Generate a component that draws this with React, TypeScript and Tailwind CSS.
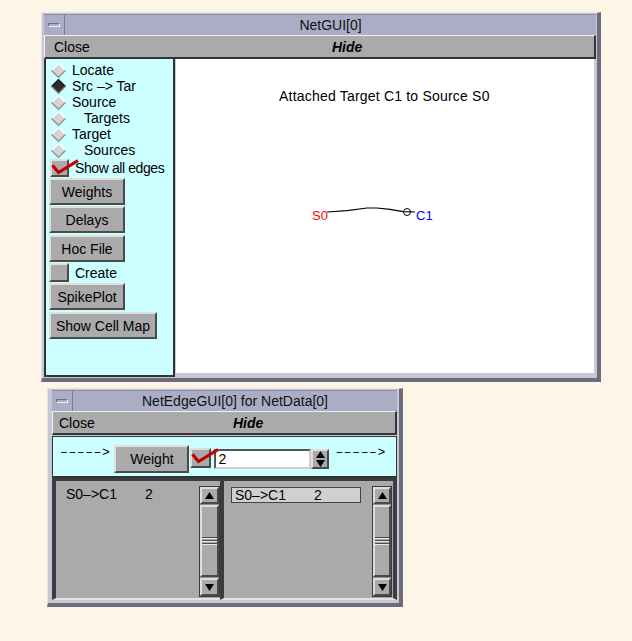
import React from "react";

const raised =
  "bg-[#aaaaaa] border-2 border-t-[#dedede] border-l-[#dedede] border-r-[#4a4a4a] border-b-[#4a4a4a]";

function Diamond({ on }: { on?: boolean }) {
  return (
    <svg width="15" height="15" viewBox="0 0 15 15" className="shrink-0">
      <polygon points="7.5,0.5 14.5,7.5 7.5,14.5 0.5,7.5" fill={on ? "#2c2c2c" : "#d4d4d4"} />
      <polyline points="0.6,7.5 7.5,0.6 14.4,7.5" fill="none" stroke={on ? "#111111" : "#ffffff"} strokeWidth="1.3" />
      <polyline points="0.6,7.5 7.5,14.4 14.4,7.5" fill="none" stroke="#8c8c8c" strokeWidth="1.3" />
    </svg>
  );
}

function Check({ className }: { className: string }) {
  return (
    <svg width="30" height="16" viewBox="0 0 30 16" className={"absolute overflow-visible " + className}>
      <path d="M2.5 6.5 L7.5 12.5 L25.5 1.5" fill="none" stroke="#c80000" strokeWidth="3.2" strokeLinejoin="miter" strokeLinecap="square" />
      <path d="M4 9 L7.5 13 L12 10" fill="none" stroke="#7a0000" strokeWidth="1" />
    </svg>
  );
}

function Radio({ on, label, indent }: { on?: boolean; label: string; indent?: boolean }) {
  return (
    <div className="h-[16px] flex items-center pl-[2px]">
      <Diamond on={on} />
      <span className={"text-[14px] leading-none whitespace-nowrap " + (indent ? "ml-[18px]" : "ml-[6px]")}>{label}</span>
    </div>
  );
}

function Btn({ label, className }: { label: string; className: string }) {
  return (
    <div className={"flex items-center justify-center text-[14px] leading-none whitespace-nowrap " + raised + " " + className}>
      {label}
    </div>
  );
}

function Tri({ up }: { up?: boolean }) {
  return (
    <svg width="9" height="7" viewBox="0 0 9 7">
      <polygon points={up ? "4.5,0 9,7 0,7" : "0,0 9,0 4.5,7"} fill="#000" />
    </svg>
  );
}

function ScrollBar({ className }: { className: string }) {
  return (
    <div className={"flex flex-col bg-[#8e8e8e] border border-[#3a3a3a] " + className}>
      <div className={"h-[17px] flex items-center justify-center " + raised}>
        <Tri up />
      </div>
      <div className={"flex-1 my-[1px] flex flex-col justify-center " + raised}>
        <div className="flex flex-col">
          <div className="h-[1px] bg-[#4a4a4a]" />
          <div className="h-[1px] bg-[#e6e6e6]" />
          <div className="h-[1px] bg-[#aaaaaa]" />
          <div className="h-[1px] bg-[#4a4a4a]" />
          <div className="h-[1px] bg-[#e6e6e6]" />
          <div className="h-[1px] bg-[#aaaaaa]" />
          <div className="h-[1px] bg-[#4a4a4a]" />
          <div className="h-[1px] bg-[#e6e6e6]" />
        </div>
      </div>
      <div className={"h-[18px] flex items-center justify-center " + raised}>
        <Tri />
      </div>
    </div>
  );
}

function TitleBar({ title }: { title: string }) {
  return (
    <div className="h-[21px] shrink-0 flex items-stretch bg-[#aaadc5] border-t border-t-[#8c8ea2]">
      <div className="w-[21px] flex items-center justify-center border-r border-r-[#7e8094]">
        <div className="w-[12px] h-[4px] border border-t-[#6c6e82] border-l-[#6c6e82] border-b-[#f2f2f8] border-r-[#f2f2f8]" />
      </div>
      <div className="flex-1 flex items-center justify-center text-[14px] leading-none text-[#111]">{title}</div>
    </div>
  );
}

export default function App() {
  return (
    <div className="relative w-[632px] h-[641px] overflow-hidden bg-[#fdf5e6] font-['Liberation_Sans',Arial,sans-serif] text-black">
      {/* Top window: NetGUI[0] */}
      <div className="absolute left-[41px] top-[12px] w-[560px] h-[370px] flex flex-col bg-[#c6c8d6] border-t border-l border-t-[#e4e4ee] border-l-[#e4e4ee] border-r-4 border-b-4 border-r-[#6c6c7c] border-b-[#6c6c7c] pl-[2px] pt-[1px] pr-[1px] pb-[1px]">
        <TitleBar title="NetGUI[0]" />
        <div className="h-[24px] shrink-0 flex items-center bg-[#aaaaaa] border-t border-l border-t-[#f2f2f2] border-l-[#f2f2f2] border-b-2 border-r-2 border-b-[#333] border-r-[#333] text-[14px] leading-none">
          <div className="w-[287px] pl-[9px]">Close</div>
          <div className="font-bold italic">Hide</div>
        </div>
        <div className="flex-1 flex min-h-0">
          <div className="w-[131px] shrink-0 bg-[#ccffff] border-l-2 border-r-2 border-b-2 border-[#333] pt-[3px] pl-[3px] flex flex-col">
            <Radio label="Locate" />
            <Radio label="Src –> Tar" on />
            <Radio label="Source" />
            <Radio label="Targets" indent />
            <Radio label="Target" />
            <Radio label="Sources" indent />
            <div className="h-[20px] flex items-center">
              <div className="relative ml-[1px]">
                <div className={"w-[19px] h-[18px] " + raised} />
                <Check className="left-[1px] top-[1px]" />
              </div>
              <span className="ml-[6px] text-[14px] leading-none tracking-[-0.4px] whitespace-nowrap">Show all edges</span>
            </div>
            <Btn label="Weights" className="w-[76px] h-[27px]" />
            <Btn label="Delays" className="w-[76px] h-[27px] mt-[1px]" />
            <Btn label="Hoc File" className="w-[76px] h-[27px] mt-[2px]" />
            <div className="h-[21px] flex items-center">
              <div className={"w-[20px] h-[19px] " + raised} />
              <span className="ml-[6px] text-[14px] leading-none">Create</span>
            </div>
            <Btn label="SpikePlot" className="w-[76px] h-[27px]" />
            <Btn label="Show Cell Map" className="w-[108px] h-[27px] mt-[2px]" />
          </div>
          <div className="flex-1 ml-[1px] mr-[2px] mb-[4px] bg-white">
            <svg width="417" height="314" viewBox="0 0 417 314" className="block">
              <text x="103" y="42" fontSize="14" letterSpacing="0.2" fill="#000" fontFamily="Liberation Sans, Arial, sans-serif">
                Attached Target C1 to Source S0
              </text>
              <polyline
                points="151,153 171,151.7 191,149 201,149 214,150.3 227,152.7 239,153"
                fill="none"
                stroke="#000"
                strokeWidth="1.2"
              />
              <circle cx="231" cy="153" r="3.5" fill="none" stroke="#000" strokeWidth="1" />
              <text x="136" y="161" fontSize="13" fill="#ff0000" fontFamily="Liberation Sans, Arial, sans-serif">
                S0
              </text>
              <text x="240" y="161" fontSize="13" fill="#0000ff" fontFamily="Liberation Sans, Arial, sans-serif">
                C1
              </text>
            </svg>
          </div>
        </div>
      </div>

      {/* Bottom window: NetEdgeGUI[0] */}
      <div className="absolute left-[47px] top-[388px] w-[356px] h-[219px] flex flex-col bg-[#c6c8d6] border-t border-l border-t-[#e4e4ee] border-l-[#e4e4ee] border-r-4 border-b-4 border-r-[#6c6c7c] border-b-[#6c6c7c] pl-[4px] pt-[1px] pr-[2px] pb-[3px]">
        <TitleBar title="NetEdgeGUI[0] for NetData[0]" />
        <div className="h-[24px] shrink-0 flex items-center bg-[#aaaaaa] border-t border-l border-t-[#f2f2f2] border-l-[#f2f2f2] border-b-2 border-r-2 border-b-[#333] border-r-[#333] text-[14px] leading-none">
          <div className="w-[180px] pl-[6px]">Close</div>
          <div className="font-bold italic">Hide</div>
        </div>
        <div className="h-[42px] shrink-0 mt-[1px] bg-[#ccffff] border border-[#333] border-b-2 flex items-start pl-[7px]">
          <span className="mt-[8px] leading-[16px] text-[13px] font-['Liberation_Mono',monospace] whitespace-pre tracking-[0.6px]">–––––&gt;</span>
          <Btn label="Weight" className="mt-[8px] ml-[4px] w-[75px] h-[28px]" />
          <div className="relative mt-[11px] ml-[1px]">
            <div className={"w-[21px] h-[20px] " + raised} />
            <Check className="left-[1px] top-[1px]" />
          </div>
          <div className="mt-[12px] ml-[3px] w-[97px] h-[20px] bg-white border-2 border-t-[#555] border-l-[#555] border-b-[#dcc8c8] border-r-[#dcc8c8] flex items-center pl-[2px] text-[14px] leading-none">
            2
          </div>
          <div className={"mt-[12px] w-[18px] h-[20px] flex flex-col items-center justify-center gap-[2px] " + raised}>
            <Tri up />
            <Tri />
          </div>
          <span className="mt-[8px] ml-[6px] leading-[16px] text-[13px] font-['Liberation_Mono',monospace] whitespace-pre tracking-[0.6px]">–––––&gt;</span>
        </div>
        <div className="flex-1 flex min-h-0">
          <div className="w-[168px] shrink-0 flex bg-[#aaaaaa] border-t-[3px] border-l-4 border-t-[#3c3c3c] border-l-[#3c3c3c] border-b-2 border-b-[#e2e2e2]">
            <div className="flex-1 pt-[5px] pl-[10px] text-[14px] leading-[16px] whitespace-pre">
              <div className="flex">
                <span className="w-[79px]">S0–&gt;C1</span>
                <span>2</span>
              </div>
            </div>
            <ScrollBar className="w-[21px] mt-[5px] mb-[1px]" />
          </div>
          <div className="flex-1 flex bg-[#aaaaaa] border-t-[3px] border-l-4 border-r-4 border-t-[#3c3c3c] border-l-[#3c3c3c] border-r-[#3c3c3c] border-b-2 border-b-[#e2e2e2]">
            <div className="flex-1 pt-[6px] pl-[7px]">
              <div className="w-[130px] h-[16px] bg-[#d0d0d0] border border-[#444] flex items-center pl-[3px] text-[14px] leading-none whitespace-pre">
                <span className="w-[79px]">S0–&gt;C1</span>
                <span>2</span>
              </div>
            </div>
            <ScrollBar className="w-[20px] mt-[5px] mb-[1px] mr-[1px]" />
          </div>
        </div>
      </div>
    </div>
  );
}
